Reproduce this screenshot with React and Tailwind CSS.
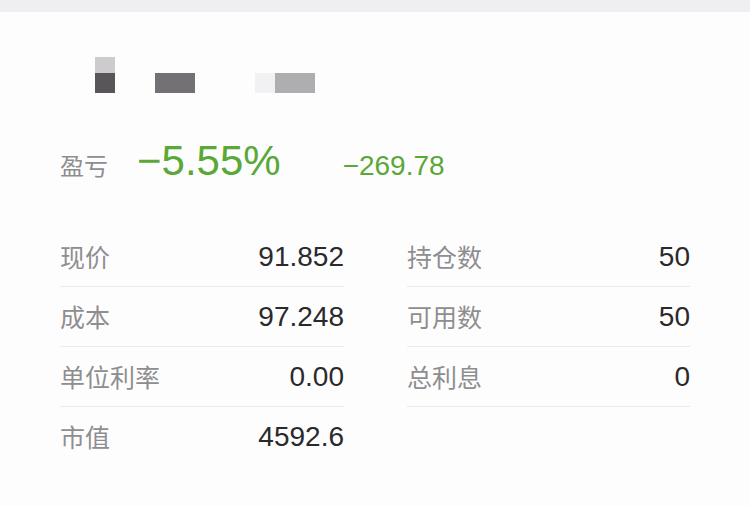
import React from 'react';

const cn = '"Noto Sans CJK SC", "Noto Sans", sans-serif';
const num = '"Liberation Sans", Arial, sans-serif';

const left = [
  { label: '现价', value: '91.852' },
  { label: '成本', value: '97.248' },
  { label: '单位利率', value: '0.00' },
  { label: '市值', value: '4592.6', last: true },
];

const right = [
  { label: '持仓数', value: '50' },
  { label: '可用数', value: '50' },
  { label: '总利息', value: '0' },
];

const Row = ({ label, value, last }) => (
  <div
    className={`flex h-[60px] items-center justify-between ${
      last ? '' : 'border-b border-[#ebebed]'
    }`}
  >
    <span className="text-[25px] text-[#8e8e90]" style={{ fontFamily: cn }}>
      {label}
    </span>
    <span className="text-[28px] text-[#2a2a2c]" style={{ fontFamily: num }}>
      {value}
    </span>
  </div>
);

export default function App() {
  return (
    <div className="w-[750px] h-[506px] bg-[#fefdfe] overflow-hidden">
      <div className="h-3 bg-[#efeef0]" />

      <div className="px-[60px]">
        {/* pixelated (masked) stock name */}
        <div className="mt-[45px] flex h-9 items-end">
          <div className="ml-[35px] flex flex-col">
            <div className="h-4 w-5 bg-[#cdcbce]" />
            <div className="h-5 w-5 bg-[#58555b]" />
          </div>
          <div className="ml-10 h-5 w-10 bg-[#737175]" />
          <div className="ml-[60px] h-5 w-5 bg-[#f1f0f2]" />
          <div className="h-5 w-10 bg-[#aeadaf]" />
        </div>

        {/* profit & loss */}
        <div className="mt-[47px] flex items-baseline">
          <span className="text-[24px] text-[#8e8e90]" style={{ fontFamily: cn }}>
            盈亏
          </span>
          <span
            className="ml-[29px] text-[42px] leading-none text-[#5aa838]"
            style={{ fontFamily: num }}
          >
            −5.55%
          </span>
          <span
            className="ml-[62px] text-[28px] leading-none text-[#5aa838]"
            style={{ fontFamily: num }}
          >
            −269.78
          </span>
        </div>

        {/* details */}
        <div className="mt-[44px] grid grid-cols-[284px_283px] gap-x-[63px]">
          <div>
            {left.map((r) => (
              <Row key={r.label} {...r} />
            ))}
          </div>
          <div>
            {right.map((r) => (
              <Row key={r.label} {...r} />
            ))}
          </div>
        </div>
      </div>
    </div>
  );
}
